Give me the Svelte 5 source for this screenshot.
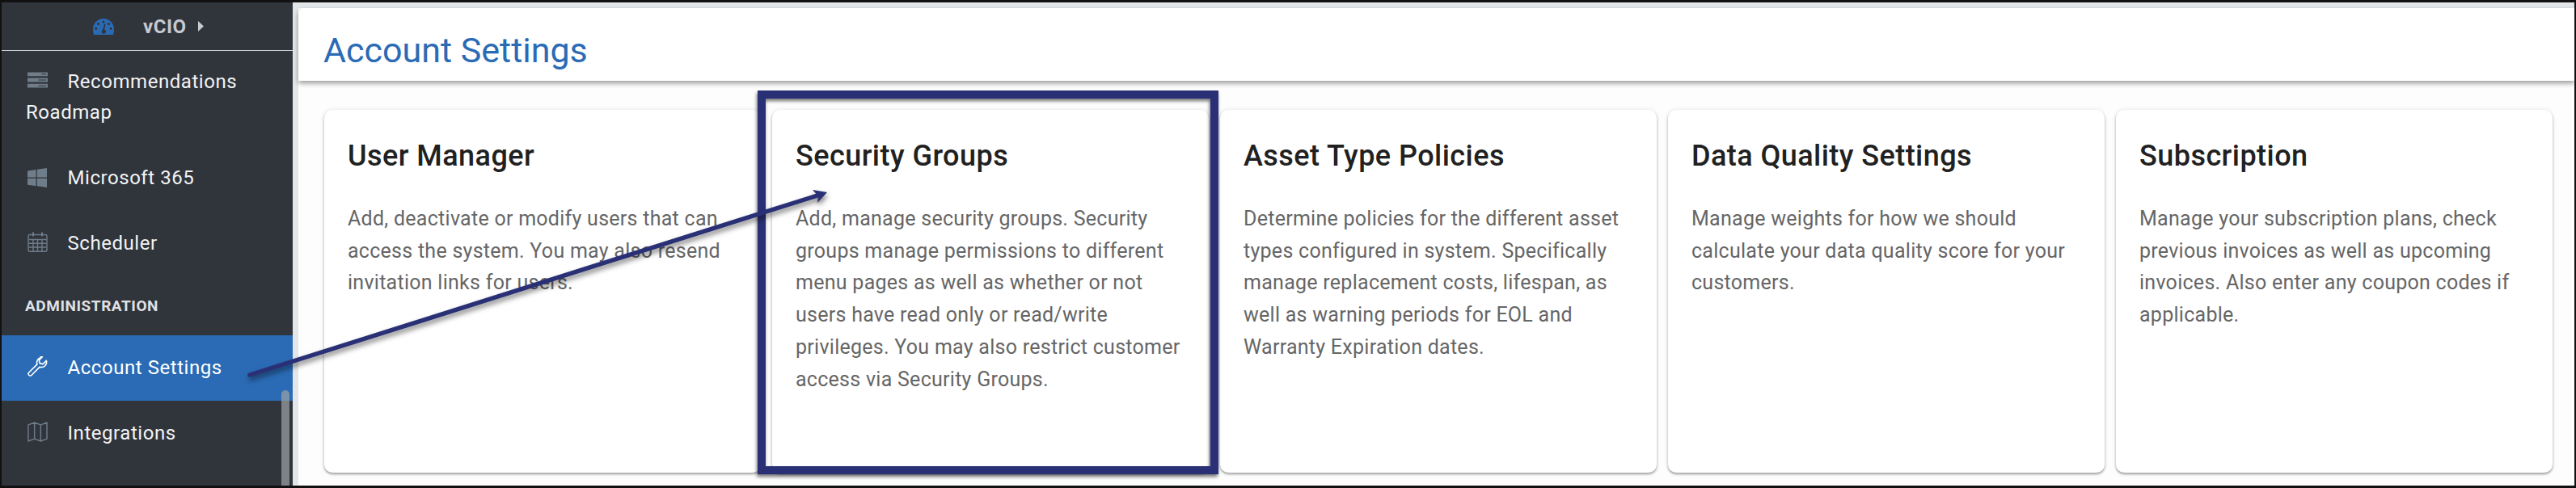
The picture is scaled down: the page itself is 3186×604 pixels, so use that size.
<script>
  // Tarjetas de configuración de la cuenta
  const cards = [
    {
      title: 'User Manager',
      text: 'Add, deactivate or modify users that can access the system. You may also resend invitation links for users.'
    },
    {
      title: 'Security Groups',
      text: 'Add, manage security groups. Security groups manage permissions to different menu pages as well as whether or not users have read only or read/write privileges. You may also restrict customer access via Security Groups.'
    },
    {
      title: 'Asset Type Policies',
      text: 'Determine policies for the different asset types configured in system. Specifically manage replacement costs, lifespan, as well as warning periods for EOL and Warranty Expiration dates.'
    },
    {
      title: 'Data Quality Settings',
      text: 'Manage weights for how we should calculate your data quality score for your customers.'
    },
    {
      title: 'Subscription',
      text: 'Manage your subscription plans, check previous invoices as well as upcoming invoices. Also enter any coupon codes if applicable.'
    }
  ];
</script>

<div class="frame">
  <aside class="sidebar">
    <div class="module">
      <svg class="gauge" viewBox="0 0 26 20" width="26" height="20">
        <path fill="#2a6ab5" fill-rule="evenodd" d="M13 0C5.800 0 0 5.800 0 13c0 2.500.4 4.900 1 7h24c.6-2.100 1-4.500 1-7C26 5.800 20.200 0 13 0ZM13 2.500a1.500 1.500 0 1 1 0 3a1.500 1.500 0 0 1 0-3ZM6.500 5a1.500 1.500 0 1 1 0 3a1.500 1.500 0 0 1 0-3ZM19.500 5a1.500 1.500 0 1 1 0 3a1.500 1.500 0 0 1 0-3ZM3.800 10.800a1.500 1.500 0 1 1 0 3a1.500 1.500 0 0 1 0-3ZM22.200 10.800a1.500 1.500 0 1 1 0 3a1.500 1.500 0 0 1 0-3ZM14.300 6.500l1.300.3-1.300 6.700a2.700 2.700 0 1 1-2.300.2Z" />
      </svg>
      <span class="module-name">vCIO</span>
      <svg viewBox="0 0 7 13" width="7" height="13"><path fill="#c5c9d0" d="M0 0l7 6.500L0 13Z" /></svg>
    </div>

    <div class="item">
      <svg class="icon server" viewBox="0 0 26 20" width="25" height="20">
        <g fill="#6f7c8a">
          <path fill-rule="evenodd" d="M0 0h26v5H0ZM18 2v1h6V2Z" />
          <path fill-rule="evenodd" d="M0 7.500h26v5H0ZM14 9.500v1h10v-1Z" />
          <path fill-rule="evenodd" d="M0 15h26v5H0ZM14 17v1h10v-1Z" />
        </g>
      </svg>
      Recommendations Roadmap
    </div>
    <div class="item">
      <svg class="icon windows" viewBox="0 0 24 24" width="24" height="24">
        <path fill="#6f7c8a" d="M0 3.400l10.600-1.500v9.600H0ZM11.800 1.700 24 0v11.500H11.800ZM0 12.700h10.600v9.500L0 20.700ZM11.800 12.700H24V24l-12.200-1.700Z" />
      </svg>
      Microsoft 365
    </div>
    <div class="item">
      <svg class="icon" viewBox="0 0 25 25" width="25" height="25">
        <g fill="none" stroke="#6f7c8a" stroke-width="1.400">
          <rect x="1" y="3.500" width="23" height="20.800" rx="2" />
          <path d="M1.500 9.500h22M1.500 14.200h22M1.500 19h22M7 9.500v14.800M12.500 9.500v14.800M18 9.500v14.800" />
          <path stroke-width="2" d="M7 .5v5M18 .5v5" />
        </g>
      </svg>
      Scheduler
    </div>

    <div class="section">ADMINISTRATION</div>

    <div class="item active">
      <svg class="icon" viewBox="0 0 26 26" width="25" height="25">
        <path fill="none" stroke="#fff" stroke-width="1.700" stroke-linejoin="round" d="M18.500 1.500c-3.600 0-6.500 2.900-6.500 6.500 0 .8.100 1.600.4 2.300L1.900 20.800c-1.100 1.100-1.100 2.400 0 3.400 1 1 2.300 1 3.400 0l10.500-10.500c.7.300 1.500.4 2.300.4 3.600 0 6.500-2.900 6.500-6.500 0-.8-.1-1.400-.3-2l-4.500 4.400-4-1-1-4 4.400-4.500c-.8-.3-1.300-.5-2.500-.5Z" />
      </svg>
      Account Settings
    </div>
    <div class="item">
      <svg class="icon" viewBox="0 0 26 26" width="25" height="25">
        <path fill="none" stroke="#6f7c8a" stroke-width="1.500" stroke-linejoin="round" d="M1 4l8-3 8 3 8-3v21l-8 3-8-3-8 3ZM9 1v21M17 4v21" />
      </svg>
      Integrations
    </div>

    <div class="scrollbar"></div>
  </aside>

  <main class="main">
    <div class="panel">
      <header class="titlebar">
        <h1>Account Settings</h1>
      </header>
      <section class="cards">
        {#each cards as card}
          <article class="card">
            <h2>{card.title}</h2>
            <p>{card.text}</p>
          </article>
        {/each}
      </section>
    </div>
  </main>

  <!-- Anotaciones sobre la captura -->
  <div class="highlight"></div>
  <svg class="arrow" viewBox="0 0 3186 604" width="3186" height="604">
    <line x1="309" y1="464" x2="1014" y2="241" stroke="#2a3076" stroke-width="5.500" stroke-linecap="round" />
    <path d="M1023 238 1005 235 1012 243 1011 251Z" fill="#2a3076" />
  </svg>
</div>

<style>
  :global(body) {
    margin: 0;
  }

  .frame {
    position: relative;
    display: flex;
    box-sizing: border-box;
    width: 3186px;
    height: 604px;
    overflow: hidden;
    border: solid #111;
    border-width: 3px 2px 3px 2px;
    font-family: Roboto, sans-serif;
  }

  .sidebar {
    position: relative;
    flex: 0 0 360px;
    background: #30343b;
    color: #f2f3f4;
    font-size: 24px;
    line-height: 38px;
    letter-spacing: 0.55px;
  }

  .module {
    display: flex;
    align-items: center;
    height: 60px;
    box-sizing: border-box;
    padding-left: 113px;
    border-bottom: 1px solid #c9ccd0;
    color: #c5c9d0;
    font-weight: 700;
  }

  .gauge {
    margin-right: 36px;
  }

  .module-name {
    margin-right: 14px;
  }

  .item {
    padding: 21.500px 20px 21.500px 30px;
  }

  .module + .item {
    padding-top: 19px;
  }

  .icon {
    vertical-align: -3px;
    margin: 0 18px 0 2px;
  }

  .server {
    vertical-align: 0;
  }

  .windows {
    vertical-align: -4px;
    margin-right: 19px;
  }

  .active {
    background: #2b6bb5;
    color: #fff;
  }

  .section {
    height: 73px;
    box-sizing: border-box;
    padding: 18px 0 0 29px;
    font-size: 19px;
    font-weight: 700;
    color: #dfe1e4;
  }

  .scrollbar {
    position: absolute;
    left: 346px;
    top: 480px;
    width: 10px;
    height: 130px;
    border-radius: 5px 5px 0 0;
    background: rgba(160, 162, 165, 0.7);
  }

  .main {
    flex: 1;
    padding: 7px 0 0 7px;
    background: #e4e7ea;
  }

  .panel {
    height: 100%;
    background: #fdfdfd;
  }

  .titlebar {
    height: 90px;
    box-sizing: border-box;
    padding: 26px 0 0 31px;
    background: #fff;
    border-radius: 6px 0 0 0;
    box-shadow: 0 3px 6px rgba(0, 0, 0, 0.4);
  }

  h1 {
    margin: 0;
    font-size: 43px;
    line-height: 52px;
    font-weight: 400;
    color: #2b6bb5;
  }

  .cards {
    display: grid;
    grid-template-columns: repeat(5, 540px);
    gap: 14px;
    padding: 36px 0 0 32px;
  }

  .card {
    height: 449px;
    box-sizing: border-box;
    padding: 35px 16px 0 29px;
    background: #fff;
    border-radius: 10px;
    box-shadow: 0 2px 3px rgba(0, 0, 0, 0.35), 0 0 6px rgba(0, 0, 0, 0.08);
  }

  h2 {
    margin: 0 0 36px;
    font-size: 36px;
    line-height: 44px;
    font-weight: 500;
    letter-spacing: 0.45px;
    color: #212121;
  }

  p {
    margin: 0;
    font-size: 25px;
    line-height: 39.700px;
    letter-spacing: 0.27px;
    color: #666;
  }

  .highlight {
    position: absolute;
    left: 935px;
    top: 109px;
    width: 570px;
    height: 475px;
    box-sizing: border-box;
    border: 10px solid #2a3076;
    filter: drop-shadow(-1px 3px 2px rgba(0, 0, 0, 0.55));
  }

  .arrow {
    position: absolute;
    left: -2px;
    top: -3px;
    filter: drop-shadow(1px 4px 3px rgba(0, 0, 0, 0.5));
  }
</style>
